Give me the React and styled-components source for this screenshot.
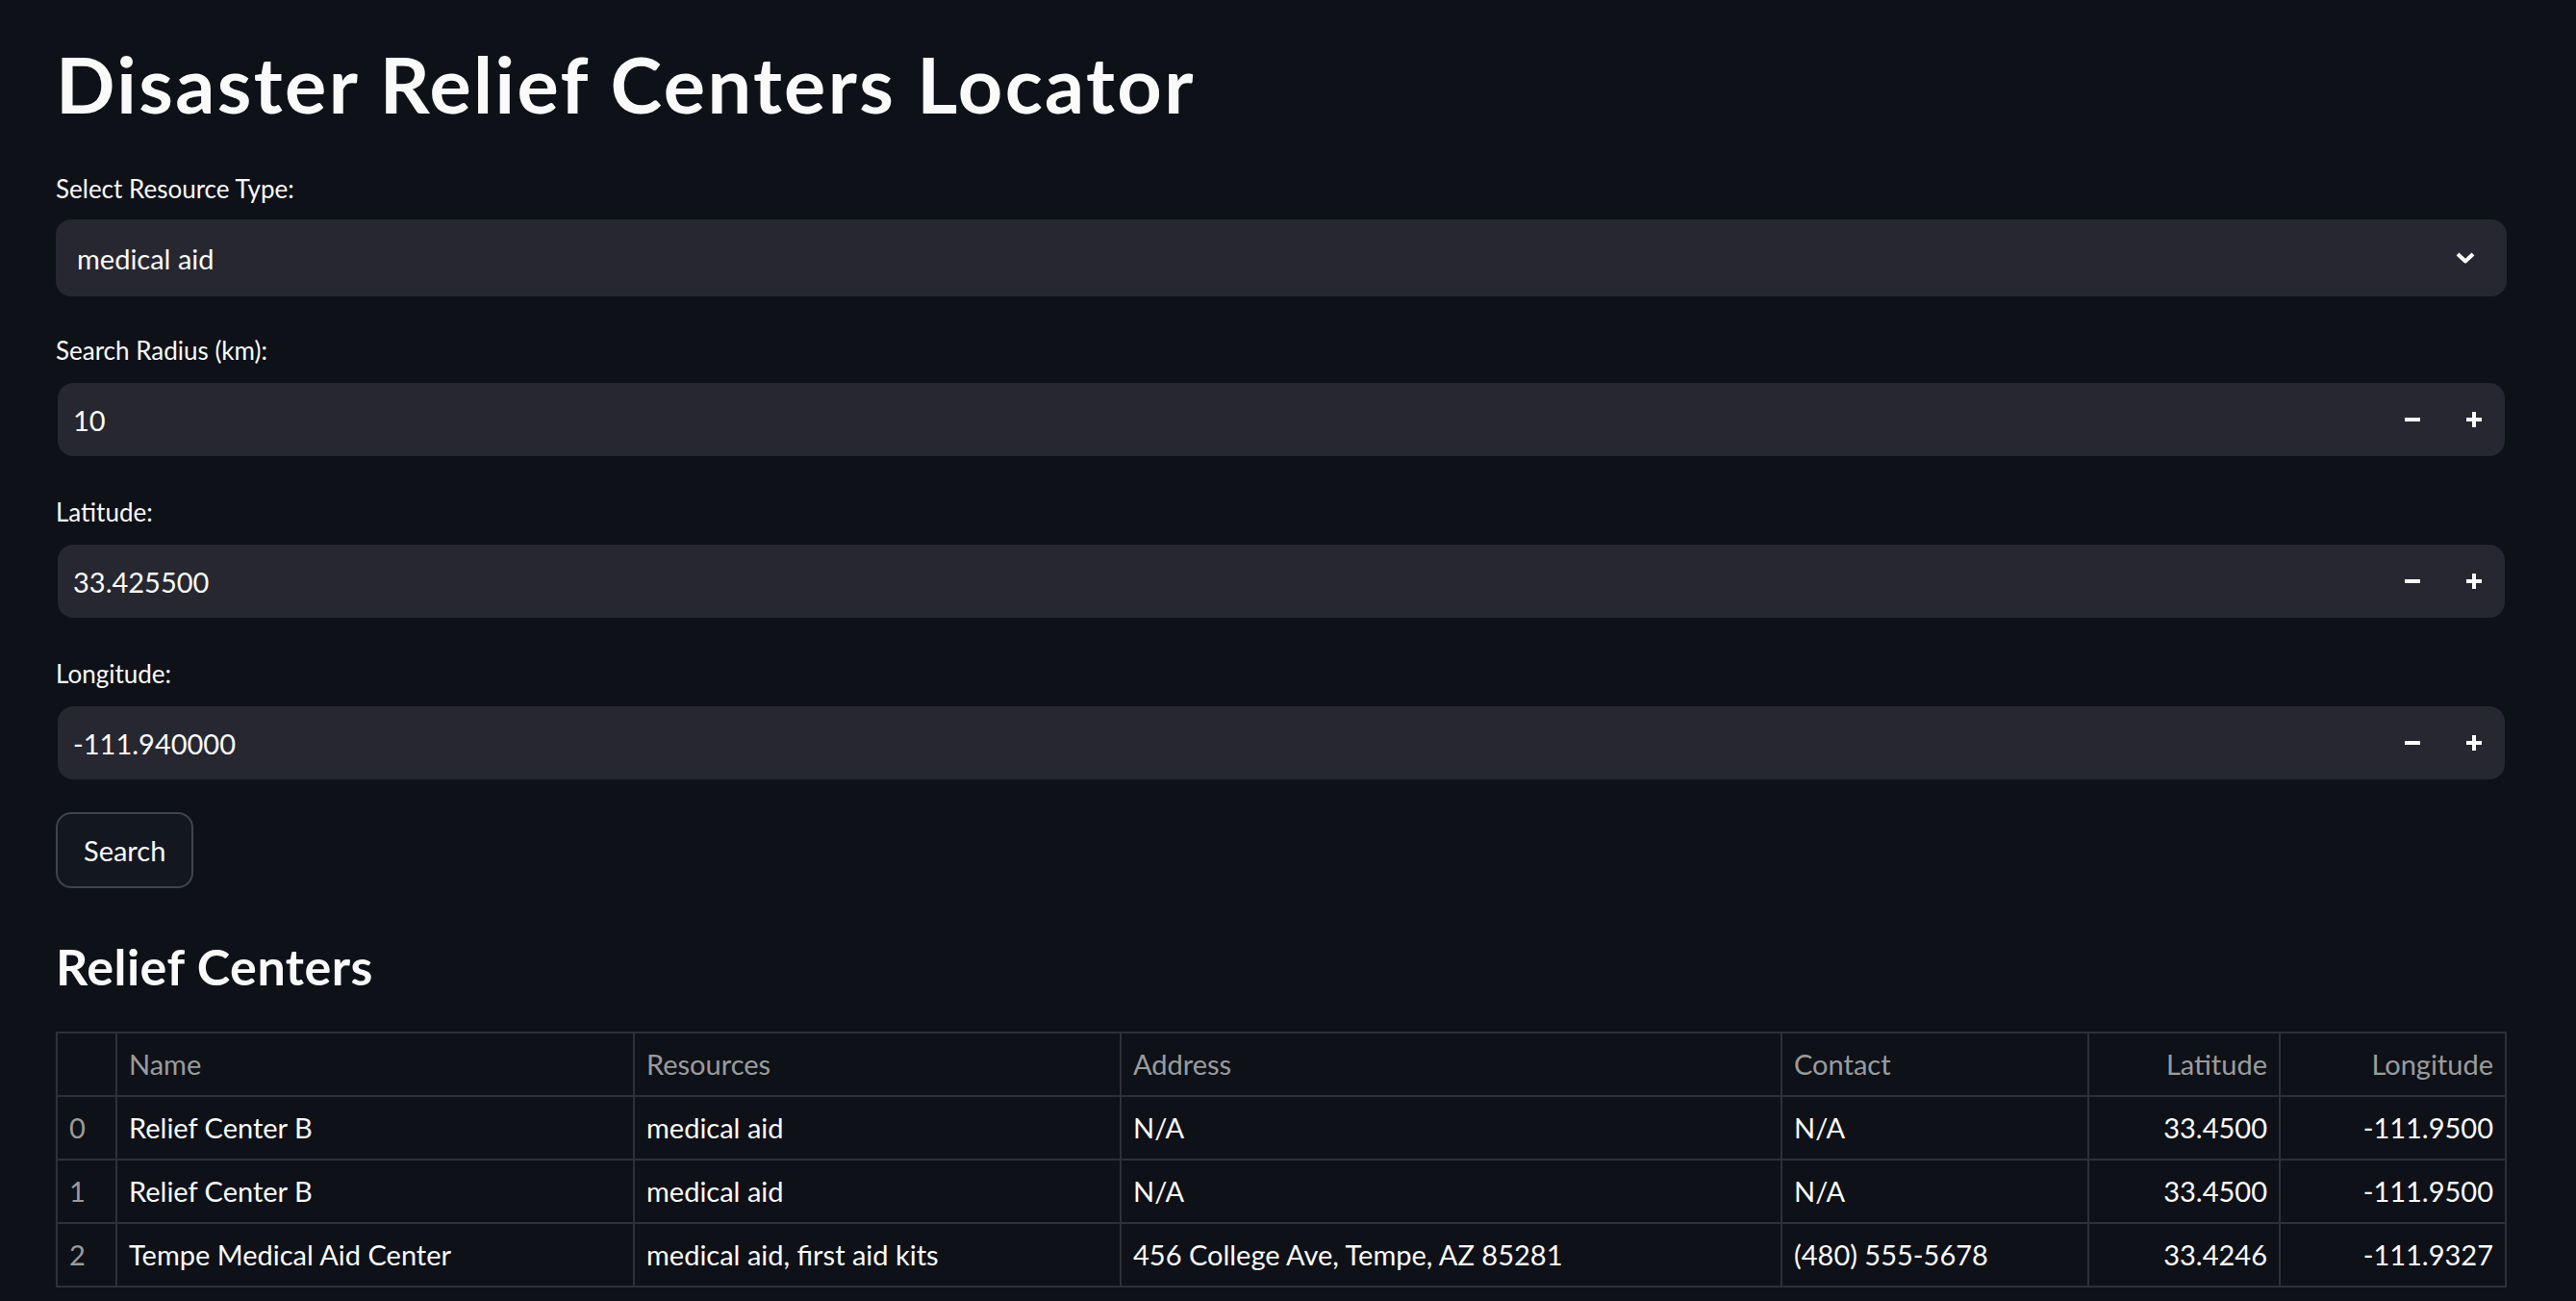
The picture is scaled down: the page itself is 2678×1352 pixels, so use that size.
import React from 'react'
import styled, { createGlobalStyle } from 'styled-components'

const colors = {
  bg: '#0e1117',
  field: '#262730',
  text: '#fafafa',
  muted: 'rgba(250, 250, 250, 0.6)',
  line: '#2e3036',
}

const font = `Lato, "Noto Sans", sans-serif`

const centers = [
  { name: 'Relief Center B', resources: 'medical aid', address: 'N/A', contact: 'N/A', lat: '33.4500', lng: '-111.9500' },
  { name: 'Relief Center B', resources: 'medical aid', address: 'N/A', contact: 'N/A', lat: '33.4500', lng: '-111.9500' },
  { name: 'Tempe Medical Aid Center', resources: 'medical aid, first aid kits', address: '456 College Ave, Tempe, AZ 85281', contact: '(480) 555-5678', lat: '33.4246', lng: '-111.9327' },
]

const columns = [
  { key: 'index', label: '', width: 62 },
  { key: 'name', label: 'Name', width: 538 },
  { key: 'resources', label: 'Resources', width: 506 },
  { key: 'address', label: 'Address', width: 687 },
  { key: 'contact', label: 'Contact', width: 319 },
  { key: 'lat', label: 'Latitude', width: 199, numeric: true },
  { key: 'lng', label: 'Longitude', width: 235, numeric: true },
]

const ChevronDown = () => (
  <svg width="20" height="12" viewBox="0 0 20 12">
    <path d="M2 2 L10 9.5 L18 2" fill="none" stroke={colors.text} strokeWidth="4" strokeLinejoin="round" />
  </svg>
)

const MinusIcon = () => (
  <svg width="16" height="16" viewBox="0 0 16 16">
    <rect x="0" y="6" width="16" height="4" fill={colors.text} />
  </svg>
)

const PlusIcon = () => (
  <svg width="16" height="16" viewBox="0 0 16 16">
    <rect x="0" y="6" width="16" height="4" fill={colors.text} />
    <rect x="6" y="0" width="4" height="16" fill={colors.text} />
  </svg>
)

const NumberField = ({ label, value }) => (
  <Field>
    <Label>{label}</Label>
    <NumberWrap>
      <NumberBox>
        <NumberInput readOnly value={value} />
        <StepButton aria-label="decrement"><MinusIcon /></StepButton>
        <StepButton aria-label="increment"><PlusIcon /></StepButton>
      </NumberBox>
    </NumberWrap>
  </Field>
)

export default function App() {
  return (
    <Page>
      <GlobalStyle />
      <Title>Disaster Relief Centers Locator</Title>
      <Form>
        <Field>
          <Label>Select Resource Type:</Label>
          <Select>
            <span>medical aid</span>
            <ChevronDown />
          </Select>
        </Field>
        <NumberField label="Search Radius (km):" value="10" />
        <NumberField label="Latitude:" value="33.425500" />
        <NumberField label="Longitude:" value="-111.940000" />
        <SearchButton>Search</SearchButton>
      </Form>
      <Heading>Relief Centers</Heading>
      <Table>
        <colgroup>
          {columns.map((c) => (
            <col key={c.key} style={{ width: c.width }} />
          ))}
        </colgroup>
        <thead>
          <tr>
            {columns.map((c) => (
              <Th key={c.key} $numeric={c.numeric}>{c.label}</Th>
            ))}
          </tr>
        </thead>
        <tbody>
          {centers.map((row, i) => (
            <tr key={i}>
              <Td $muted>{i}</Td>
              {columns.slice(1).map((c) => (
                <Td key={c.key} $numeric={c.numeric}>{row[c.key]}</Td>
              ))}
            </tr>
          ))}
        </tbody>
      </Table>
    </Page>
  )
}

const GlobalStyle = createGlobalStyle`
  html, body {
    margin: 0;
    background: ${colors.bg};
  }
  body {
    font-family: ${font};
    color: ${colors.text};
  }
`

const Page = styled.main`
  width: 2548px;
  padding: 38px 72px 40px 58px;
  display: flex;
  flex-direction: column;
`

const Title = styled.h1`
  margin: 0;
  font-size: 81px;
  font-weight: 700;
  line-height: 97px;
  letter-spacing: 2.4px;
`

const Form = styled.div`
  margin-top: 37px;
  display: flex;
  flex-direction: column;
  gap: 32px;
`

const Field = styled.div`
  display: flex;
  flex-direction: column;
`

const Label = styled.label`
  height: 48px;
  margin-bottom: 8px;
  display: flex;
  align-items: center;
  font-size: 26px;
  line-height: 48px;
`

const Select = styled.div`
  height: 80px;
  box-sizing: border-box;
  padding: 0 33px 0 22px;
  border-radius: 16px;
  background: ${colors.field};
  display: flex;
  align-items: center;
  justify-content: space-between;
  font-size: 29px;
`

const NumberWrap = styled.div`
  height: 80px;
  padding: 2px;
  box-sizing: border-box;
`

const NumberBox = styled.div`
  height: 76px;
  border-radius: 16px;
  background: ${colors.field};
  display: flex;
  align-items: center;
  overflow: hidden;
`

const NumberInput = styled.input`
  flex: 1;
  min-width: 0;
  height: 100%;
  padding: 0 0 0 16px;
  border: 0;
  outline: none;
  background: transparent;
  color: ${colors.text};
  font-family: ${font};
  font-size: 29px;
`

const StepButton = styled.button`
  width: 64px;
  height: 100%;
  padding: 0;
  border: 0;
  background: transparent;
  display: flex;
  align-items: center;
  justify-content: center;
`

const SearchButton = styled.button`
  align-self: flex-start;
  height: 79px;
  padding: 0 27px;
  border: 2px solid rgba(250, 250, 250, 0.2);
  border-radius: 16px;
  background: #131720;
  color: ${colors.text};
  font-family: ${font};
  font-size: 29px;
`

const Heading = styled.h3`
  margin: 50px 0 0;
  font-size: 52px;
  font-weight: 700;
  line-height: 62px;
  letter-spacing: 0.5px;
`

const Table = styled.table`
  margin-top: 37px;
  width: 2546px;
  table-layout: fixed;
  border-collapse: collapse;
  border: 2px solid ${colors.line};
  font-size: 29px;
`

const Th = styled.th`
  padding: 12px 12px;
  border: 2px solid ${colors.line};
  color: ${colors.muted};
  font-weight: 400;
  line-height: 40px;
  text-align: ${(p) => (p.$numeric ? 'right' : 'left')};
  white-space: nowrap;
`

const Td = styled.td`
  padding: 12px 12px;
  border: 2px solid ${colors.line};
  color: ${(p) => (p.$muted ? colors.muted : colors.text)};
  line-height: 40px;
  text-align: ${(p) => (p.$numeric ? 'right' : 'left')};
  white-space: nowrap;
`
